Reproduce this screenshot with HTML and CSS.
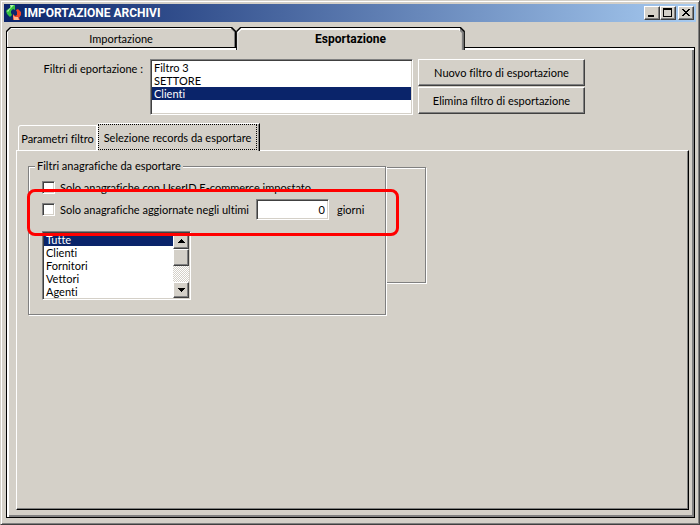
FILE: index.html
```
<!DOCTYPE html>
<html lang="it">
<head>
<meta charset="utf-8">
<title>IMPORTAZIONE ARCHIVI</title>
<link rel="stylesheet" href="styles.css">
</head>
<body>
<main class="window">
  <header class="titlebar">
    <svg class="app-icon" viewBox="0 0 16 16" aria-hidden="true">
      <path d="M4 0H9V5L7 4L5 6V8L6 10L4 12L1 9L0 6L2 4L4 3Z" fill="#35c13e"/>
      <path d="M4 0H8L4 4L2 7L1 6L5 2Z" fill="#b4f5a8"/>
      <path d="M12 4L15 7V10L13 13L14 15H7V9L9 11L11 10V7L10 5Z" fill="#ee4326"/>
      <path d="M7 10L9 12L12 12L13 15H8Z" fill="#ffb48d"/>
    </svg>
    <h1 class="title">IMPORTAZIONE ARCHIVI</h1>
    <button class="caption" type="button" aria-label="Riduci a icona">
      <svg viewBox="0 0 12 10" shape-rendering="crispEdges"><path d="M2 7H8V9H2Z"/></svg>
    </button>
    <button class="caption" type="button" aria-label="Ingrandisci">
      <svg viewBox="0 0 12 10" shape-rendering="crispEdges"><path fill-rule="evenodd" d="M1 0H10V9H1ZM2 2V8H9V2Z"/></svg>
    </button>
    <button class="caption caption-close" type="button" aria-label="Chiudi">
      <svg viewBox="0 0 12 10" shape-rendering="crispEdges"><path d="M2 1H4V2H5V3H7V2H8V1H10V2H9V3H8V4H7V5H8V6H9V7H10V8H8V7H7V6H5V7H4V8H2V7H3V6H4V5H5V4H4V3H3V2H2Z"/></svg>
    </button>
  </header>

  <section class="book">
    <nav class="tabs" role="tablist">
      <button class="tab" type="button" role="tab" aria-selected="false">Importazione</button>
      <button class="tab tab-active" type="button" role="tab" aria-selected="true">Esportazione</button>
    </nav>
    <div class="page">
      <div class="filters">
        <label class="filters-label" for="filtri">Filtri di eportazione :</label>
        <select class="list filters-list" id="filtri" size="4">
          <option>Filtro 3</option>
          <option>SETTORE</option>
          <option selected>Clienti</option>
        </select>
        <div class="filters-actions">
          <button class="push" type="button">Nuovo filtro di esportazione</button>
          <button class="push" type="button">Elimina filtro di esportazione</button>
        </div>
      </div>

      <nav class="subtabs" role="tablist">
        <button class="subtab" type="button" role="tab" aria-selected="false">Parametri filtro</button>
        <button class="subtab subtab-active" type="button" role="tab" aria-selected="true"><span class="focus">Selezione records da esportare</span></button>
      </nav>
      <div class="subpage">
        <div class="groups">
          <div class="group-back"></div>
          <fieldset class="group">
            <legend>Filtri anagrafiche da esportare</legend>
            <div class="row">
              <input class="check" type="checkbox" id="userid">
              <label for="userid">Solo anagrafiche con UserID E-commerce impostato</label>
            </div>
            <div class="row row-days">
              <input class="check" type="checkbox" id="recenti">
              <label class="days-label" for="recenti">Solo anagrafiche aggiornate negli ultimi</label>
              <input class="number" id="giorni" type="text" value="0">
              <label for="giorni">giorni</label>
            </div>
            <div class="scrollbox">
              <select class="scroll-list" size="5" aria-label="Tipo anagrafica">
                <option selected>Tutte</option>
                <option>Clienti</option>
                <option>Fornitori</option>
                <option>Vettori</option>
                <option>Agenti</option>
              </select>
              <div class="scrollbar">
                <button class="arrow" type="button" tabindex="-1" aria-label="Su"><svg viewBox="0 0 7 4" shape-rendering="crispEdges"><path d="M3 0H4V1H5V2H6V3H7V4H0V3H1V2H2V1H3Z"/></svg></button>
                <div class="thumb"></div>
                <div class="track"></div>
                <button class="arrow" type="button" tabindex="-1" aria-label="Giù"><svg viewBox="0 0 7 4" shape-rendering="crispEdges"><path d="M0 0H7V1H6V2H5V3H4V4H3V3H2V2H1V1H0Z"/></svg></button>
              </div>
            </div>
          </fieldset>
          <div class="highlight"></div>
        </div>
      </div>
    </div>
  </section>
</main>
</body>
</html>
```
FILE: styles.css
```
:root {
  --face: #d4d0c8;
  --shadow: #808080;
  --dark: #404040;
  --navy: #0a246a;
}

* {
  box-sizing: border-box;
}

body {
  margin: 0;
  background: var(--face);
  color: #000;
  font: 11px/13px Lato, "Liberation Sans", sans-serif;
  white-space: nowrap;
}

button,
input,
select {
  margin: 0;
  padding: 0;
  border: 0;
  border-radius: 0;
  color: inherit;
  font: inherit;
  outline: 0;
}

body,
button,
input,
select,
option {
  font-variant-ligatures: none;
}

.window {
  display: flex;
  flex-direction: column;
  min-height: 100vh;
  padding: 3px 3px 6px;
  border: 1px solid;
  border-color: var(--face) var(--dark) var(--dark) var(--face);
  box-shadow: inset 1px 1px #fff, inset -1px -1px var(--shadow);
}

/* Title bar */
.titlebar {
  display: flex;
  align-items: center;
  height: 18px;
  padding: 0 2px;
  background: linear-gradient(to right, var(--navy), #a6caf0);
}

.app-icon {
  width: 16px;
  height: 16px;
}

.title {
  flex: 1;
  margin: 0 0 0 2px;
  color: #fff;
  font-family: Roboto, "Liberation Sans", sans-serif;
  font-size: 12px;
  line-height: 18px;
}

.caption,
.push,
.arrow,
.thumb {
  background: var(--face);
  border: 1px solid;
  border-color: #fff var(--dark) var(--dark) #fff;
  box-shadow: inset -1px -1px var(--shadow);
}

.caption {
  width: 16px;
  height: 14px;
}

.caption svg {
  display: block;
  width: 12px;
  height: 10px;
  margin-left: 1px;
}

.caption-close {
  margin-left: 2px;
}

/* Main tabs */
.book {
  flex: 1;
  display: flex;
  flex-direction: column;
  margin: 5px 1px 0 2px;
}

.tabs {
  display: flex;
  height: 21px;
}

.tab {
  position: relative;
  z-index: 0;
  width: 33.4%;
  height: 20px;
  padding-top: 2px;
  background: #000;
  clip-path: polygon(0 4px, 4px 0, calc(100% - 4px) 0, 100% 4px, 100% 100%, 0 100%);
}

.tab::before,
.tab::after {
  content: "";
  position: absolute;
  z-index: -1;
}

.tab::before {
  inset: 1px 1px 0;
  background: linear-gradient(to right, #fff calc(100% - 4px), var(--shadow) 0);
  clip-path: polygon(0 4px, 4px 0, calc(100% - 4px) 0, 100% 4px, 100% 100%, 0 100%);
}

.tab::after {
  inset: 2px 2px 0;
  background: var(--face);
  clip-path: polygon(0 3px, 3px 0, calc(100% - 3px) 0, 100% 3px, 100% 100%, 0 100%);
}

.tab-active {
  z-index: 1;
  width: 33.2%;
  height: 23px;
  font-family: Roboto, "Liberation Sans", sans-serif;
  font-size: 12px;
  font-weight: bold;
}

.tab-active::after {
  inset: 3px 3px 0 2px;
}

.page {
  flex: 1;
  display: flex;
  flex-direction: column;
  margin-top: -1px;
  padding: 11px 5px 7px 7px;
  border: 1px solid #000;
  box-shadow: inset 2px 2px #fff, inset -2px -2px var(--shadow);
}

.filters {
  display: flex;
  align-items: flex-start;
}

.filters-label {
  flex: none;
  width: 129px;
  padding-top: 3px;
  text-align: right;
}

.list,
.number,
.check,
.scrollbox {
  background: #fff;
  border: 1px solid;
  border-color: var(--shadow) #fff #fff var(--shadow);
  box-shadow: inset 1px 1px var(--dark), inset -1px -1px var(--face);
}

.list {
  overflow: hidden;
  padding: 1px;
}

.filters-list {
  width: 263px;
  height: 56px;
  margin: 0 5px 0 7px;
}

option {
  height: 13px;
  min-height: 13px;
  padding: 0 2px;
  line-height: 13px;
}

option:checked {
  background: linear-gradient(var(--navy), var(--navy));
  color: #fff;
}

.filters-actions {
  display: grid;
  gap: 1px;
}

.push {
  width: 167px;
  height: 27px;
}

/* Secondary tabs */
.subtabs {
  position: relative;
  display: flex;
  align-items: flex-end;
  height: 27px;
  margin: 8px 0 0 4px;
}

.subtab {
  width: 79px;
  height: 25px;
  background: var(--face);
  border: 1px solid #fff;
  border-bottom: 0;
  border-radius: 3px 0 0 0;
}

.subtab-active {
  width: 163px;
  height: 28px;
  margin-bottom: -1px;
  padding: 0 1px 1px 0;
  border-right-color: #000;
  box-shadow: inset -1px 0 var(--shadow);
}

.focus {
  display: block;
  width: 159px;
  height: 26px;
  border: 1px dotted #000;
  line-height: 26px;
}

.subpage {
  flex: 1;
  margin-left: 2px;
  padding: 8px 11px;
  border: 1px solid;
  border-color: #fff #000 #000 #fff;
  box-shadow: inset -1px -1px var(--shadow);
}

/* Group boxes */
.groups {
  position: relative;
  display: grid;
  width: 399px;
}

.group,
.group-back {
  grid-area: 1 / 1;
}

.group-back,
.group::before {
  border: 1px solid var(--shadow);
  box-shadow: 1px 1px #fff, inset 1px 1px #fff;
}

.group-back {
  height: 116px;
  margin: 8px 1px 0 0;
}

.group {
  position: relative;
  z-index: 0;
  width: 358px;
  height: 156px;
  min-width: 0;
  margin: 0;
  padding: 0 13px;
  border: 0;
}

.group::before {
  content: "";
  position: absolute;
  z-index: -1;
  inset: -6px 0 0;
  background: var(--face);
}

.group legend {
  margin-left: -6px;
  padding: 0 2px;
  background: var(--face);
}

.row {
  display: flex;
  align-items: center;
  height: 22px;
  margin-top: 4px;
  padding-left: 1px;
}

.row-days {
  margin-top: 0;
}

.check,
.number {
  appearance: none;
}

.check {
  width: 13px;
  height: 13px;
  margin-right: 5px;
}

.days-label {
  width: 196px;
}

.number {
  width: 73px;
  height: 21px;
  margin-right: 8px;
  padding: 0 3px;
  text-align: right;
}

.scrollbox {
  display: flex;
  width: 149px;
  height: 69px;
  margin: 11px 0 0 1px;
  padding: 1px;
}

.scroll-list {
  flex: 1;
  min-width: 0;
  overflow: hidden;
  background: #fff;
}

.scrollbar {
  display: flex;
  flex-direction: column;
  width: 16px;
}

.arrow {
  display: grid;
  place-content: center;
  flex: none;
  height: 16px;
}

.arrow svg {
  display: block;
  width: 7px;
  height: 4px;
}

.thumb {
  flex: none;
  height: 17px;
}

.track {
  flex: 1;
  background: repeating-conic-gradient(#fff 0 25%, var(--face) 0 50%) 0 0 / 2px 2px;
}

.highlight {
  position: absolute;
  top: 30px;
  left: -1px;
  width: 372px;
  height: 47px;
  border: 3px solid #f00;
  border-radius: 8px;
  pointer-events: none;
}
```
